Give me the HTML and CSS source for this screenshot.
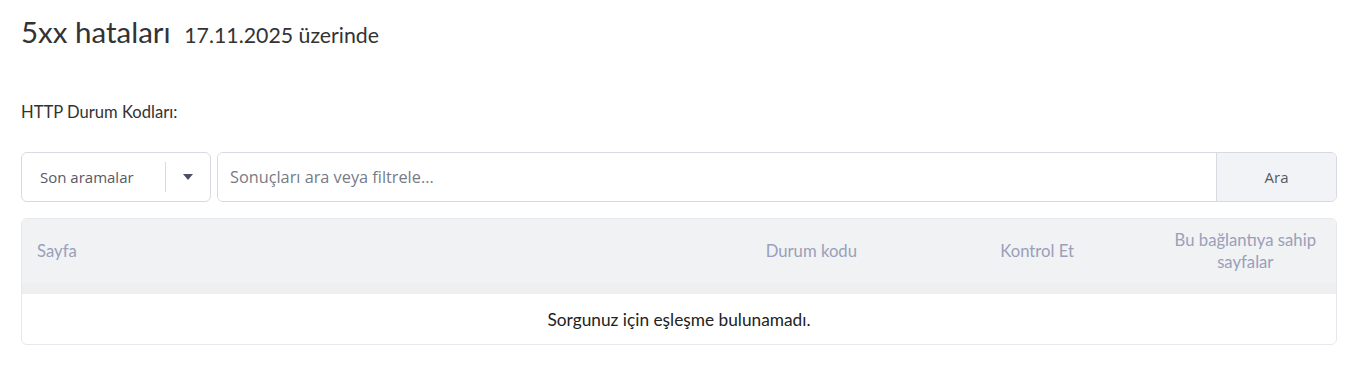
FILE: index.html
```html
<!DOCTYPE html>
<html lang="tr">
<head>
    <meta charset="UTF-8">
    <meta name="viewport" content="width=device-width, initial-scale=1.0">
    <title>5xx hataları</title>
    <link rel="stylesheet" href="styles.css">
</head>
<body>
<div class="page">
    <h1 class="title">5xx hataları <span class="title-date">17.11.2025 üzerinde</span></h1>

    <p class="codes-label">HTTP Durum Kodları:</p>

    <form class="search-row">
        <div class="recent">
            <span class="recent-text">Son aramalar</span>
            <span class="recent-sep"></span>
            <span class="recent-caret">
                <svg width="10" height="6" viewBox="0 0 10 6"><path d="M0 0h10L5 6z" fill="#4a5068"/></svg>
            </span>
        </div>
        <div class="search-box">
            <input class="search-input" type="text" placeholder="Sonuçları ara veya filtrele...">
            <button class="search-btn" type="button">Ara</button>
        </div>
    </form>

    <div class="results">
        <div class="results-head">
            <div class="col col-page">Sayfa</div>
            <div class="col col-code">Durum kodu</div>
            <div class="col col-check">Kontrol Et</div>
            <div class="col col-links"><span class="links-text">Bu bağlantıya sahip<br>sayfalar</span></div>
        </div>
        <div class="results-band"></div>
        <div class="results-empty">Sorgunuz için eşleşme bulunamadı.</div>
    </div>
</div>
</body>
</html>
```

FILE: styles.css
```css
*
{
    margin: 0;
    padding: 0;
    box-sizing: border-box;
}
body
{
    background-color: #fff;
    color: #2b2b2b;
    font-family: Lato, "Liberation Sans", sans-serif;
}
.page
{
    padding: 13px 16px 0 21px;
}
.title
{
    font-size: 29.5px;
    font-weight: 400;
    line-height: 38px;
    color: #333;
}
.title-date
{
    font-size: 21.3px;
    margin-left: 6px;
}
.codes-label
{
    margin-top: 48px;
    font-size: 16.6px;
    line-height: 20px;
    color: #333;
}
.search-row
{
    display: flex;
    gap: 6px;
    margin-top: 30px;
    height: 50px;
}
.recent
{
    width: 190px;
    display: flex;
    align-items: center;
    border: 1px solid #d9d9e3;
    border-radius: 6px;
    font-family: "Open Sans", sans-serif;
    font-size: 15px;
    color: #555a66;
}
.recent-text
{
    padding-left: 18px;
    flex: 1;
}
.recent-sep
{
    width: 1px;
    height: 30px;
    background-color: #d9d9e3;
}
.recent-caret
{
    width: 44px;
    display: flex;
    justify-content: center;
}
.search-box
{
    flex: 1;
    display: flex;
    border: 1px solid #d9d9e3;
    border-radius: 6px;
    overflow: hidden;
}
.search-input
{
    flex: 1;
    border: none;
    outline: none;
    padding-left: 12px;
    font-family: "Open Sans", sans-serif;
    font-size: 16.3px;
    color: #333;
}
.search-input::placeholder
{
    color: #777b86;
}
.search-btn
{
    width: 120px;
    border: none;
    border-left: 1px solid #d9d9e3;
    background-color: #f2f3f6;
    font-family: "Open Sans", sans-serif;
    font-size: 15px;
    color: #555a66;
}
.results
{
    margin-top: 16px;
    border: 1px solid #e6e8ee;
    border-radius: 6px;
    overflow: hidden;
}
.results-head
{
    display: flex;
    align-items: center;
    height: 64px;
    background-color: #f1f2f4;
    color: #9a9fba;
    font-size: 16.7px;
    line-height: 22px;
}
.col-page
{
    flex: 1;
    padding-left: 15px;
}
.col-code
{
    width: 140px;
    text-align: right;
}
.col-check
{
    width: 217px;
    text-align: right;
}
.col-links
{
    width: 262px;
    text-align: right;
    padding-right: 20px;
}
.links-text
{
    display: inline-block;
    text-align: center;
}
.results-band
{
    height: 11px;
    background-color: #efefef;
    border-bottom: 1px solid #eaedf2;
}
.results-empty
{
    height: 50px;
    display: flex;
    align-items: center;
    justify-content: center;
    font-size: 17.3px;
    color: #222;
}
```
